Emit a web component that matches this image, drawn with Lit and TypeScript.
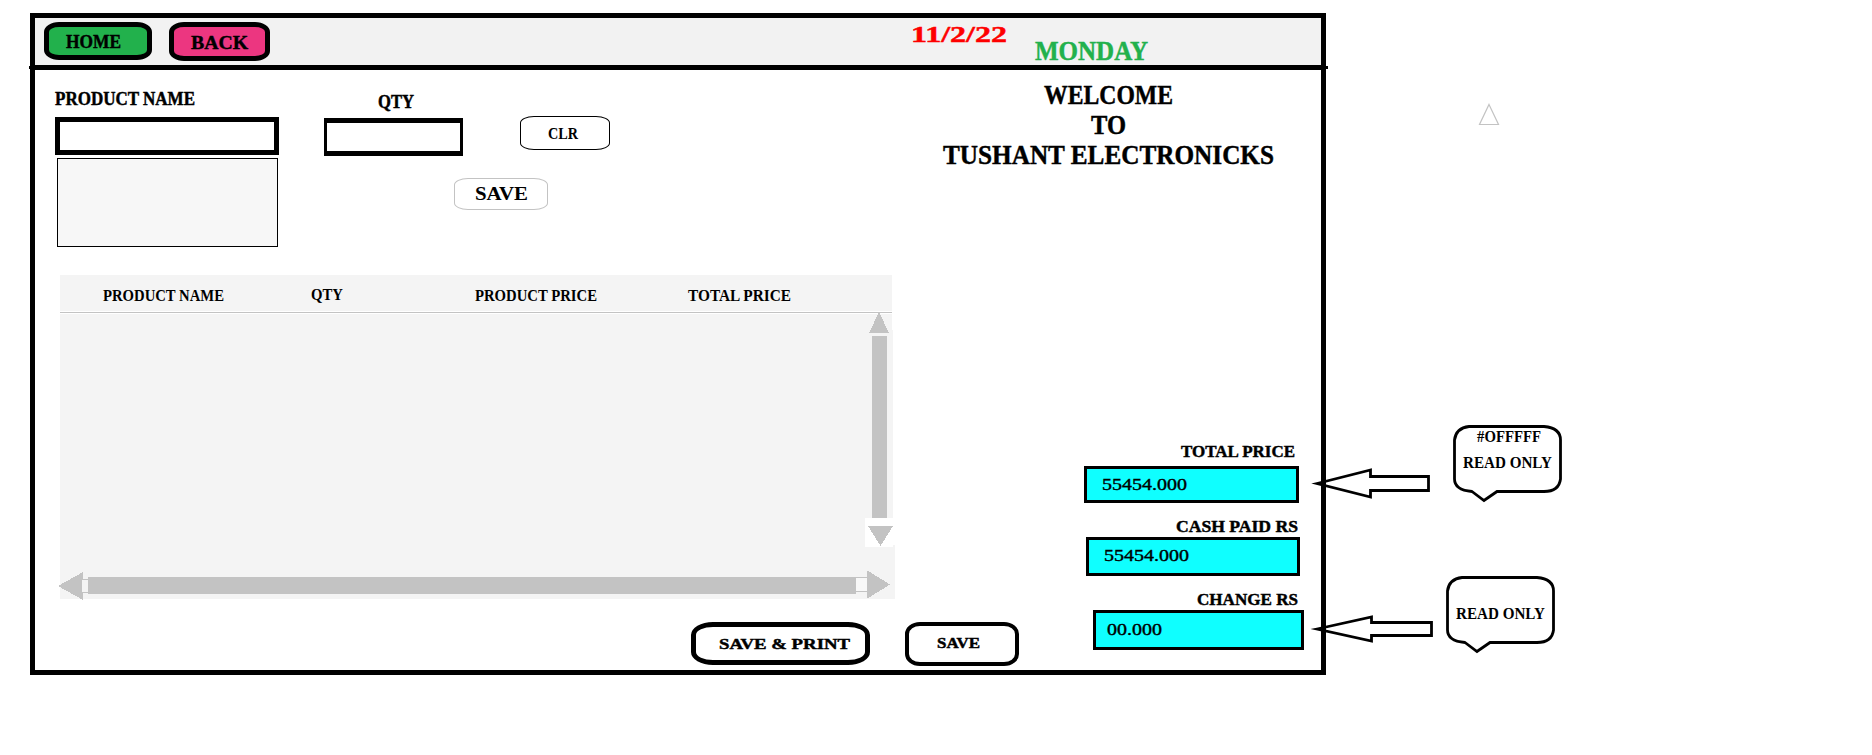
import { LitElement, html, css, svg } from "lit";
import { customElement } from "lit/decorators.js";

// A lettered label whose box is exactly as wide as the text and as tall as its capitals.
const label = (text: string, width: number, cap: number, cls = "") => html`
  <svg class="label ${cls}" width=${width} height=${cap} role="img" aria-label=${text}>
    <text x="0" y=${cap} font-size=${cap / 0.655} textLength=${width} lengthAdjust="spacingAndGlyphs">${text}</text>
  </svg>
`;

const labelStyles = css`
  .label {
    display: block;
    flex: none;
    overflow: visible;
    fill: #000;
    stroke: #000;
    stroke-width: 0.45px;
    font-family: "Liberation Serif", serif;
    font-weight: 700;
  }
`;

@customElement("top-bar")
class TopBar extends LitElement {
  static styles = [
    labelStyles,
    css`
      :host {
        display: flex;
        align-items: flex-start;
        position: relative;
        box-sizing: border-box;
        height: 52px;
        background: #f2f2f2;
        border-bottom: 5px solid #000;
      }
      :host::before,
      :host::after {
        content: "";
        position: absolute;
        top: 48px;
        width: 7px;
        height: 3px;
        background: #000;
      }
      :host::before { left: -6px; }
      :host::after { right: -7px; }
      .btn {
        display: flex;
        align-items: flex-start;
        box-sizing: border-box;
        border: 5px solid #000;
        border-radius: 15px / 10px;
        margin: 4px 0 0;
        padding: 0;
        font: inherit;
      }
      .home {
        width: 108px;
        height: 38px;
        margin-left: 9px;
        padding: 8px 0 0 17px;
        background: #22b14c;
      }
      .back {
        width: 101px;
        height: 39px;
        margin-left: 17px;
        padding: 9px 0 0 17px;
        background: #ec3680;
      }
      .date { fill: #fe0000; stroke: #fe0000; margin: 9px 0 0 641px; }
      .day { fill: #22b14c; stroke: #22b14c; margin: 24px 0 0 28px; }
    `,
  ];
  render() {
    return html`
      <button class="btn home">${label("HOME", 55, 13)}</button>
      <button class="btn back">${label("BACK", 57, 13)}</button>
      ${label("11/2/22", 96, 15, "date")} ${label("MONDAY", 113, 18, "day")}
    `;
  }
}

@customElement("entry-form")
class EntryForm extends LitElement {
  static styles = [
    labelStyles,
    css`
      :host { display: flex; align-items: flex-start; width: 575px; flex: none; }
      .name { margin: 23px 0 0 20px; width: 224px; }
      .input {
        display: block;
        box-sizing: border-box;
        height: 38px;
        width: 100%;
        border: 5px solid #000;
        border-radius: 0;
        margin: 12px 0 0;
        padding: 0 8px;
        background: #fff;
      }
      .list {
        box-sizing: border-box;
        height: 89px;
        margin: 3px 1px 0 2px;
        border: 1px solid #000;
        background: #f7f7f7;
      }
      .side { margin-left: 45px; }
      .row { display: flex; align-items: flex-start; }
      .qty { width: 139px; padding-top: 26px; }
      .qty .label { margin-left: 54px; }
      .qty .input { margin-top: 10px; border-width: 5px 3px; }
      .btn {
        display: flex;
        align-items: flex-start;
        box-sizing: border-box;
        border: 1px solid #000;
        border-radius: 14px / 7px;
        background: #fff;
        font: inherit;
      }
      .btn .label { stroke: none; }
      .clr { width: 90px; height: 34px; margin: 46px 0 0 57px; padding: 11px 0 0 27px; }
      .save { width: 94px; height: 32px; margin: 22px 0 0 130px; padding: 8px 0 0 20px; border-color: #c3c3c3; }
    `,
  ];
  render() {
    return html`
      <div class="name">
        ${label("PRODUCT NAME", 140, 12)}
        <input class="input" aria-label="PRODUCT NAME" />
        <div class="list"></div>
      </div>
      <div class="side">
        <div class="row">
          <div class="qty">
            ${label("QTY", 36, 12)}
            <input class="input" aria-label="QTY" />
          </div>
          <button class="btn clr">${label("CLR", 30, 11)}</button>
        </div>
        <button class="btn save">${label("SAVE", 53, 13)}</button>
      </div>
    `;
  }
}

@customElement("product-table")
class ProductTable extends LitElement {
  static styles = [
    labelStyles,
    css`
      :host { display: block; width: 832px; height: 324px; margin-left: 25px; background: #f4f4f4; }
      .head {
        display: grid;
        grid-template-columns: 208px 164px 213px 1fr;
        box-sizing: border-box;
        height: 36px;
        padding: 15px 0 0 43px;
      }
      .label { stroke: none; }
      .raised { margin-top: -1px; }
      .rule { height: 1px; border: solid #fff; border-width: 1px 0; background: #c3c3c3; }
      .scroll { display: block; overflow: visible; shape-rendering: crispEdges; }
      .v { margin: -2px 0 0 805px; }
      .h { margin-left: -2px; }
    `,
  ];
  render() {
    return html`
      <div class="head">
        ${label("PRODUCT NAME", 121, 11)} ${label("QTY", 32, 11, "raised")}
        ${label("PRODUCT PRICE", 122, 11)} ${label("TOTAL PRICE", 103, 11)}
      </div>
      <div class="rule"></div>
      <svg class="scroll v" width="30" height="235" viewBox="865 312 30 235">
        ${svg`
          <rect x="892" y="330" width="1" height="217" fill="#f4f4f4" />
          <path d="M879 312L889 333H869Z" fill="#c3c3c3" />
          <rect x="872" y="336" width="15" height="182" fill="#c3c3c3" />
          <rect x="865" y="518" width="28" height="29" fill="#fff" />
          <path d="M868 526H893L880.5 546Z" fill="#c3c3c3" />`}
      </svg>
      <svg class="scroll h" width="837" height="53" viewBox="58 547 837 53">
        ${svg`
          <path d="M892 547V599H895V545H893V547Z" fill="#f4f4f4" />
          <path d="M58 586L83 572V600Z" fill="#c3c3c3" />
          <path d="M82 579H88V593H82Z" fill="#c3c3c3" />
          <path d="M82 580H88V592H82Z" fill="#f4f4f4" />
          <rect x="88" y="577" width="768" height="17" fill="#c3c3c3" />
          <path d="M856 577H867V592H856Z" fill="#c3c3c3" />
          <path d="M856 578H867V591H856Z" fill="#f8f8f8" />
          <path d="M866.5 570L890 584.5L866.5 599Z" fill="#c3c3c3" />`}
      </svg>
    `;
  }
}

@customElement("price-totals")
class PriceTotals extends LitElement {
  static styles = [
    labelStyles,
    css`
      :host { display: flex; flex-direction: column; align-items: flex-end; width: 220px; }
      .box { box-sizing: border-box; border: 3px solid #000; background: #0fffff; }
      .value { font-weight: 400; stroke-width: 0.4px; }
      .total-l { margin: 171px 9px 9px 0; }
      .total { width: 215px; height: 37px; margin-right: 5px; padding: 10px 0 0 15px; }
      .cash-l { margin: 18px 6px 5px 0; }
      .cash { width: 214px; height: 39px; margin-right: 4px; padding: 10px 0 0 15px; }
      .change-l { margin: 18px 6px 5px 0; }
      .change { width: 211px; height: 40px; padding: 11px 0 0 11px; }
    `,
  ];
  render() {
    return html`
      ${label("TOTAL PRICE", 114, 11, "total-l")}
      <div class="box total">${label("55454.000", 85, 11, "value")}</div>
      ${label("CASH PAID RS", 122, 11, "cash-l")}
      <div class="box cash">${label("55454.000", 85, 11, "value")}</div>
      ${label("CHANGE RS", 101, 11, "change-l")}
      <div class="box change">${label("00.000", 55, 11, "value")}</div>
    `;
  }
}

@customElement("read-only-note")
class ReadOnlyNote extends LitElement {
  static properties = { code: {} };
  declare code: string;
  static styles = [
    labelStyles,
    css`
      :host { display: block; position: relative; width: 109px; height: 77px; }
      .bubble { position: absolute; inset: 0; overflow: visible; }
      .text { position: relative; display: flex; flex-direction: column; padding: 6px 0 0 10px; }
      .code { margin: 0 0 15px 14px; }
      .plain { padding-top: 32px; }
      .label { stroke: none; }
    `,
  ];
  render() {
    return html`
      <svg class="bubble" width="109" height="77" viewBox="0 0 109 77">
        <path
          d="M16 1.5H91Q107.500 3 107.500 15V54Q106 66.500 91 66.500H44L31 75.500L19 66.500Q1.500 65 1.500 54V15Q3 3 16 1.500Z"
          fill="#fff" stroke="#000" stroke-width="2.8" />
      </svg>
      <div class="text ${this.code ? "" : "plain"}">
        ${this.code ? label(this.code, 64, 11, "code") : ""} ${label("READ ONLY", 89, 11)}
      </div>
    `;
  }
}

@customElement("app-root")
class AppRoot extends LitElement {
  static styles = [
    labelStyles,
    css`
      :host { display: block; position: relative; width: 1872px; height: 755px; background: #fff; overflow: hidden; }
      .window {
        box-sizing: border-box;
        width: 1296px;
        height: 662px;
        margin: 13px 0 0 30px;
        border: 5px solid #000;
      }
      .stage { display: flow-root; }
      .upper { display: flex; align-items: flex-start; height: 205px; }
      .welcome {
        display: flex;
        flex-direction: column;
        align-items: center;
        gap: 12px;
        margin: 16px 0 0 333px;
      }
      .lower { display: flex; align-items: flex-start; }
      .left { width: 984px; }
      .totals { margin-left: 65px; }
      .actions { display: flex; margin: 23px 0 0 656px; gap: 35px; }
      .btn {
        display: flex;
        align-items: flex-start;
        box-sizing: border-box;
        background: #fff;
        font: inherit;
        border: 5px solid #000;
      }
      .print { width: 179px; height: 43px; padding: 12px 0 0 23px; border-radius: 22px / 13px; }
      .save { width: 114px; height: 44px; padding: 12px 0 0 28px; border-width: 4px; border-radius: 15px / 12px; }
      .note-a, .note-b, .marks { position: absolute; }
      .marks { left: 0; top: 0; pointer-events: none; }
      .note-a { left: 1453px; top: 425px; }
      .note-b { left: 1446px; top: 576px; }
    `,
  ];
  render() {
    return html`
      <div class="stage">
        <main class="window">
          <top-bar></top-bar>
          <section class="upper">
            <entry-form></entry-form>
            <div class="welcome">
              ${label("WELCOME", 129, 18)} ${label("TO", 35, 18)} ${label("TUSHANT ELECTRONICKS", 331, 18)}
            </div>
          </section>
          <section class="lower">
            <div class="left">
              <product-table></product-table>
              <div class="actions">
                <button class="btn print">${label("SAVE & PRINT", 131, 10)}</button>
                <button class="btn save">${label("SAVE", 43, 10)}</button>
              </div>
            </div>
            <price-totals class="totals"></price-totals>
          </section>
        </main>
      </div>
      <svg class="marks" width="1872" height="755" viewBox="0 0 1872 755" fill="none" stroke="#000" stroke-width="2.8" stroke-miterlimit="12">
        <path d="M1317 483.500L1370.500 470V476.500H1428.500V490.500H1370.500V497Z" />
        <path d="M1317 629L1371.500 617V622.500H1431.500V635.500H1371.500V641Z" />
        <path d="M1489 104.500L1498.500 124.500H1479.500Z" stroke="#c3c3c3" stroke-width="1.2" />
      </svg>
      <read-only-note class="note-a" code="#OFFFFF"></read-only-note>
      <read-only-note class="note-b"></read-only-note>
    `;
  }
}
